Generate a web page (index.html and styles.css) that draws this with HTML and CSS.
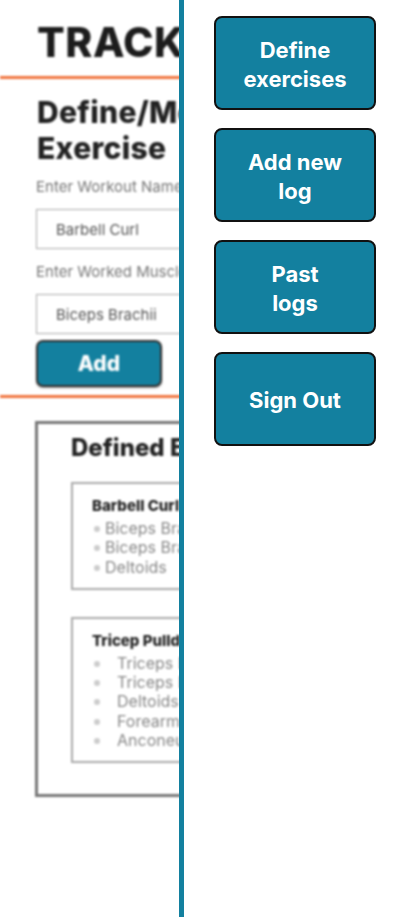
FILE: index.html
```html
<!DOCTYPE html>
<html lang="en">
  <head>
    <meta charset="UTF-8" />
    <meta name="viewport" content="width=device-width, initial-scale=1.0" />
    <title>Track It</title>
    <link rel="stylesheet" href="styles.css">
  </head>
  <body>
    <div class="screen">
      <div class="behind">
        <div class="page">
          <h1 class="brand">TRACK IT</h1>
          <div class="rule top"></div>
          <div class="form">
            <h2 class="form-title">Define/Modify<br />Exercise</h2>
            <label class="lbl">Enter Workout Name</label>
            <div class="field">Barbell Curl</div>
            <label class="lbl">Enter Worked Muscles</label>
            <div class="field">Biceps Brachii</div>
            <div class="add-btn">Add</div>
          </div>
          <div class="rule"></div>
          <div class="defined">
            <h3 class="defined-title">Defined Exercises</h3>
            <div class="ex-card">
              <div class="ex-name">Barbell Curl</div>
              <ul class="muscles">
                <li>Biceps Brachii</li>
                <li>Biceps Brachialis</li>
                <li>Deltoids</li>
              </ul>
            </div>
            <div class="ex-card">
              <div class="ex-name">Tricep Pulldown</div>
              <ul class="muscles wide">
                <li>Triceps Brachii</li>
                <li>Triceps Lateral</li>
                <li>Deltoids</li>
                <li>Forearms</li>
                <li>Anconeus</li>
              </ul>
            </div>
          </div>
        </div>
      </div>
      <nav class="drawer">
        <button class="nav-btn">Define<br />exercises</button>
        <button class="nav-btn">Add new<br />log</button>
        <button class="nav-btn">Past<br />logs</button>
        <button class="nav-btn">Sign Out</button>
      </nav>
    </div>
  </body>
</html>
```

FILE: styles.css
```css
* {
  box-sizing: border-box;
}
body {
  margin: 0;
  font-family: Inter, "Liberation Sans", sans-serif;
  background: #fff;
}
.screen {
  display: flex;
  height: 917px;
  overflow: hidden;
}
.behind {
  width: 179px;
  flex-shrink: 0;
  overflow: hidden;
}
.page {
  width: 440px;
  filter: blur(1.1px);
  color: #222;
}
.brand {
  margin: 0;
  padding: 18px 0 0 37px;
  font-size: 41px;
  font-weight: 800;
  line-height: 48px;
  letter-spacing: 0.5px;
  color: #1c1c1c;
}
.rule {
  height: 3px;
  background: #f0743e;
  margin-top: 8px;
}
.rule.top {
  margin-top: 10px;
}
.form {
  padding: 15px 0 0 36px;
  display: flex;
  flex-direction: column;
}
.form-title {
  margin: 0 0 12px 1px;
  font-size: 30px;
  font-weight: 800;
  line-height: 36px;
  letter-spacing: 0.3px;
  color: #222;
}
.lbl {
  font-size: 15px;
  color: #777;
  line-height: 18px;
  margin-bottom: 13px;
}
.field {
  width: 320px;
  height: 40px;
  border: 1px solid #aaa;
  padding: 0 19px;
  display: flex;
  align-items: center;
  font-size: 15px;
  color: #555;
  margin-bottom: 14px;
}
.field + .add-btn {
  margin-top: -8px;
}
.add-btn {
  width: 126px;
  height: 47px;
  background: #13809f;
  border: 2px solid #333;
  border-radius: 7px;
  color: #fff;
  font-weight: 800;
  font-size: 21px;
  display: flex;
  align-items: center;
  justify-content: center;
  box-shadow: 0 1px 2px rgba(0, 0, 0, 0.4);
}
.defined {
  margin: 23px 0 0 35px;
  width: 360px;
  height: 376px;
  border: 3px solid #777;
  padding: 10px 0 0 33px;
}
.defined-title {
  margin: 0 0 20px 0;
  font-size: 24px;
  font-weight: 800;
  line-height: 28px;
  color: #222;
}
.ex-card {
  width: 280px;
  border: 2px solid #aaa;
  padding: 13px 0 11px 19px;
  margin-bottom: 27px;
}
.ex-name {
  font-size: 15px;
  font-weight: 800;
  color: #222;
  line-height: 18px;
  margin-bottom: 4px;
}
.muscles {
  margin: 0;
  padding: 0;
  list-style: none;
}
.muscles li {
  position: relative;
  padding-left: 13px;
  font-size: 16px;
  line-height: 19.3px;
  color: #888;
}
.muscles li::before {
  content: "";
  position: absolute;
  left: 2px;
  top: 7px;
  width: 6px;
  height: 6px;
  border-radius: 50%;
  background: #ccc;
}
.muscles.wide li {
  padding-left: 25px;
}
.drawer {
  flex: 1;
  border-left: 5px solid #13809f;
  padding: 16px 0 0 30px;
  display: flex;
  flex-direction: column;
  gap: 18px;
}
.nav-btn {
  width: 162px;
  height: 94px;
  background: #13809f;
  border: 2px solid #111;
  border-radius: 8px;
  color: #fff;
  font-family: Inter, "Liberation Sans", sans-serif;
  font-size: 22px;
  font-weight: 700;
  line-height: 29px;
  padding: 3px 6px 0;
  cursor: pointer;
}
```
